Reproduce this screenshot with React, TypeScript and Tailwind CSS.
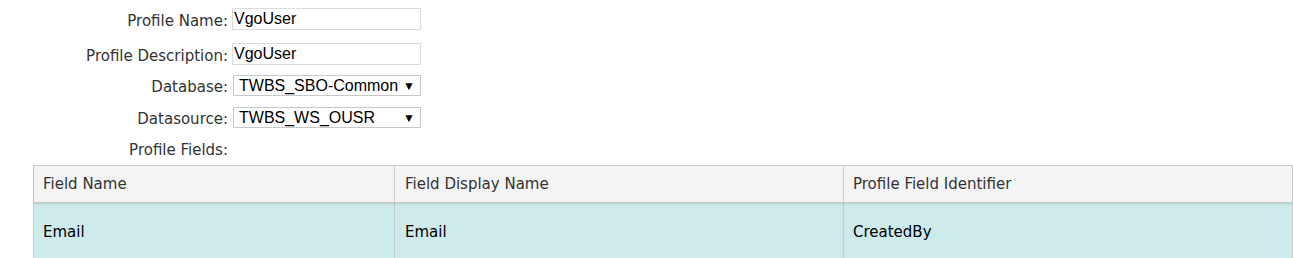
import React from "react";

const label = "text-right text-[15px] text-[#333] pr-[4px] leading-none mt-[4px]";
const lf = { fontFamily: '"DejaVu Sans", Verdana, sans-serif' } as const;
const af = { fontFamily: '"Liberation Sans", Arial, sans-serif' } as const;

export default function App() {
  return (
    <div className="w-[1293px] h-[258px] overflow-hidden bg-white relative" style={lf}>
      <div className="w-[1400px]">
        <div className="flex items-center pt-[8px] h-[30px]">
          <div className={`w-[232px] ${label}`}>Profile Name:</div>
          <div className="w-[189px] h-[22px] border border-[#dcdcdc] flex items-center pl-[1px] text-[16px] text-black leading-none" style={af}>VgoUser</div>
        </div>
        <div className="flex items-center mt-[13px] h-[22px]">
          <div className={`w-[232px] ${label}`}>Profile Description:</div>
          <div className="w-[189px] h-[22px] border border-[#dcdcdc] flex items-center pl-[1px] text-[16px] text-black leading-none" style={af}>VgoUser</div>
        </div>
        <div className="flex items-center mt-[10px] h-[21px]">
          <div className={`w-[233px] ${label} pr-[5px]`}>Database:</div>
          <div className="w-[188px] h-[21px] border border-[#c8c8c8] flex items-center justify-between pl-[5px] pr-[5px] text-[16px] text-black leading-none" style={af}>
            <span>TWBS_SBO-Common</span>
            <span className="text-[12px]">▼</span>
          </div>
        </div>
        <div className="flex items-center mt-[11px] h-[21px]">
          <div className={`w-[233px] ${label} pr-[5px]`}>Datasource:</div>
          <div className="w-[188px] h-[21px] border border-[#c8c8c8] flex items-center justify-between pl-[5px] pr-[5px] text-[16px] text-black leading-none" style={af}>
            <span>TWBS_WS_OUSR</span>
            <span className="text-[12px]">▼</span>
          </div>
        </div>
        <div className="flex items-center mt-[12px] h-[20px]">
          <div className="w-[232px] text-right text-[15px] text-[#333] pr-[4px] leading-none">Profile Fields:</div>
        </div>
        <div className="mt-[5px] ml-[33px] w-[1260px] border border-[#cccccc] border-b-0">
          <div className="flex h-[37px] bg-[#f4f4f4] border-b border-[#c8c8c8] shadow-[0_1px_2px_rgba(0,0,0,0.12)] relative z-10 text-[15px] text-[#333]">
            <div className="w-[361px] flex items-center pl-[9px] border-r border-[#cccccc]">Field Name</div>
            <div className="w-[449px] flex items-center pl-[10px] border-r border-[#cccccc]">Field Display Name</div>
            <div className="flex-1 flex items-center pl-[9px]">Profile Field Identifier</div>
          </div>
          <div className="flex h-[60px] bg-[#cdebeb] text-[15px] text-black">
            <div className="w-[361px] flex items-start pt-[18px] pl-[9px] border-r border-[#cccccc]">Email</div>
            <div className="w-[449px] flex items-start pt-[18px] pl-[10px] border-r border-[#cccccc]">Email</div>
            <div className="flex-1 flex items-start pt-[18px] pl-[9px]">CreatedBy</div>
          </div>
        </div>
      </div>
    </div>
  );
}
